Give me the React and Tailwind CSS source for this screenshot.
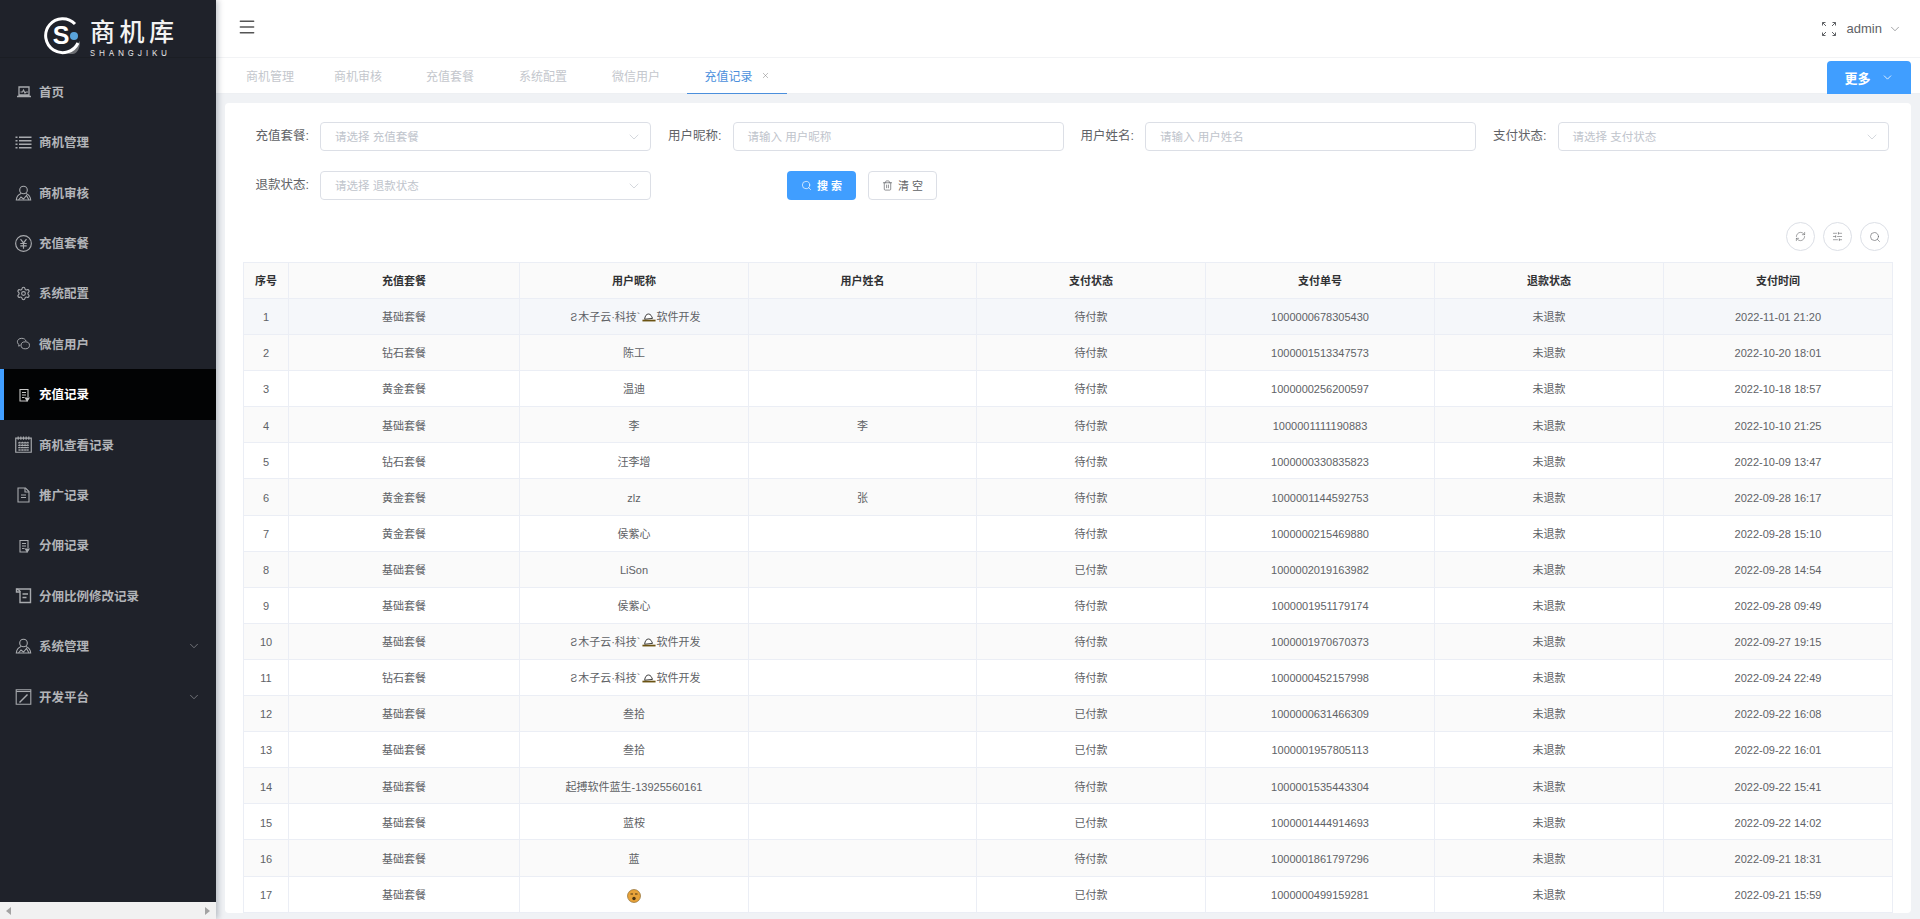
import React from "react";
import { Menu, ChevronDown, Search, Trash2, RefreshCw, SlidersHorizontal, X, Settings } from "lucide-react";

const Icon = ({ className, children, box = "0 0 16 16" }) => (
  <svg viewBox={box} fill="none" stroke="currentColor" strokeWidth="1.1" className={className}>
    {children}
  </svg>
);

const DocIcon = () => (
  <Icon className="w-[12px] h-[14px]" box="0 0 12 14">
    <path d="M9 13H2V1.500h8V9" />
    <path d="M4 4.500h4M4 7h4M4 9.500h2.500" />
    <path d="M7.500 10h3.500L9.200 13z" fill="currentColor" />
  </Icon>
);

const UserIcon = () => (
  <Icon className="w-[17px] h-[16px]">
    <circle cx="8" cy="5" r="3.800" />
    <path d="M5.500 8.500C3 9.500 1 12 .8 15h14.400C15 12 13 9.500 10.500 8.500" />
    <path d="M3 15l2.500-3 2.500 2 3-3.500 2.500 4.500" />
  </Icon>
);

const menus = [
  {
    name: "首页",
    icon: (
      <Icon className="w-[16px] h-[12px]" box="0 0 16 12">
        <path d="M3 1h10v8H3zM1 10.500h14" strokeWidth="1.300" />
        <path d="M4.500 6h2l1-2 1.500 3 1-1h2" />
      </Icon>
    ),
  },
  {
    name: "商机管理",
    icon: (
      <Icon className="w-[17px] h-[13px]" box="0 0 17 13">
        <path d="M4 1.200h12.500M4 4.700h12.500M4 8.200h12.500M4 11.700h12.500" strokeWidth="1.400" />
        <path d="M.5 1.200h2M.5 4.700h2M.5 8.200h2M.5 11.700h2" strokeWidth="1.400" />
      </Icon>
    ),
  },
  { name: "商机审核", icon: <UserIcon /> },
  {
    name: "充值套餐",
    icon: (
      <Icon className="w-[17px] h-[17px]">
        <circle cx="8" cy="8" r="7.400" />
        <path d="M5.200 3.800L8 7.500l2.800-3.700M5 8h6M5 10.300h6M8 7.500V13" />
      </Icon>
    ),
  },
  { name: "系统配置", icon: <Settings className="w-[15px] h-[15px]" strokeWidth={1.75} /> },
  {
    name: "微信用户",
    icon: (
      <Icon className="w-[15px] h-[14px]">
        <path d="M6 1.500C3 1.500 1 3.300 1 5.500c0 1.300.7 2.400 1.800 3.100L2.500 10.500l2-1.100" />
        <path d="M6 1.500c2.500 0 4.500 1.400 4.900 3.300" />
        <ellipse cx="10" cy="9.500" rx="4.800" ry="4" />
        <path d="M8.200 8.800h.1M11.500 8.800h.1" strokeWidth="1.500" />
      </Icon>
    ),
  },
  { name: "充值记录", icon: <DocIcon />, active: true },
  {
    name: "商机查看记录",
    icon: (
      <Icon className="w-[17px] h-[17px]">
        <path d="M.7 2h14.600v13.300H.7z" />
        <path d="M3 .5v3M5.500.5v3M8 .5v3M10.500.5v3M13 .5v3" />
        <path d="M3 6.500h10M3 8.800h10M3 11h10M3 13.200h10M4.500 5.500v8.500M7 5.500v8.500M9.500 5.500v8.500M12 5.500v8.500" strokeDasharray="1.500 .8" />
      </Icon>
    ),
  },
  {
    name: "推广记录",
    icon: (
      <Icon className="w-[13px] h-[16px]" box="0 0 13 16">
        <path d="M1 1h7.500L12 4.500V15H1z" />
        <path d="M8 1v4h4M4 8h5M4 10.500h5" />
      </Icon>
    ),
  },
  { name: "分佣记录", icon: <DocIcon /> },
  {
    name: "分佣比例修改记录",
    icon: (
      <Icon className="w-[17px] h-[16px]">
        <path d="M1 1h14v13.500H4.500V4H1z" strokeWidth="1.400" />
        <path d="M1 1c1.500.5 3.500 1 3.500 3M7 6h5.500M7 9.500h4" strokeWidth="1.400" />
      </Icon>
    ),
  },
  { name: "系统管理", icon: <UserIcon />, arrow: true },
  {
    name: "开发平台",
    icon: (
      <Icon className="w-[17px] h-[16px]">
        <path d="M.7.7h14.600v14.600H.7z" />
        <path d="M.7 2.500h14.600" />
        <path d="M3.500 13l8-8 1 1-8 8z" fill="currentColor" stroke="none" />
      </Icon>
    ),
    arrow: true,
  },
];

const Hat = () => (
  <svg viewBox="0 0 16 10" className="inline-block w-[14px] h-[9px] mx-[1px] align-[-1px]">
    <path d="M3 7C3.500 3 5 1 7.500 1S11 3.500 12 6z" fill="#fff" stroke="#222" strokeWidth="1" />
    <path d="M.5 8.500h15" stroke="#6b5312" strokeWidth="2" />
  </svg>
);

const nick = (
  <span className="pl-[3px]">
    <span className="text-[10px] mr-[1px]">Ƨ</span>木子云·科技`
    <Hat />
    软件开发
  </span>
);

const Face = () => (
  <svg viewBox="0 0 14 14" className="inline-block w-[14px] h-[14px]">
    <circle cx="7" cy="7" r="6.500" fill="#e8a33a" stroke="#7d5a1f" strokeWidth=".6" />
    <path d="M3.500 5h2.500M8 5h2.500" stroke="#4a3312" strokeWidth="1.200" />
    <circle cx="7" cy="9.500" r="1.700" fill="#4a3312" />
  </svg>
);

const rows = [
  ["基础套餐", nick, "", "待付款", "1000000678305430", "2022-11-01 21:20"],
  ["钻石套餐", "陈工", "", "待付款", "1000001513347573", "2022-10-20 18:01"],
  ["黄金套餐", "温迪", "", "待付款", "1000000256200597", "2022-10-18 18:57"],
  ["基础套餐", "李", "李", "待付款", "1000001111190883", "2022-10-10 21:25"],
  ["钻石套餐", "汪李增", "", "待付款", "1000000330835823", "2022-10-09 13:47"],
  ["黄金套餐", "zlz", "张", "待付款", "1000001144592753", "2022-09-28 16:17"],
  ["黄金套餐", "侯紫心", "", "待付款", "1000000215469880", "2022-09-28 15:10"],
  ["基础套餐", "LiSon", "", "已付款", "1000002019163982", "2022-09-28 14:54"],
  ["基础套餐", "侯紫心", "", "待付款", "1000001951179174", "2022-09-28 09:49"],
  ["基础套餐", nick, "", "待付款", "1000001970670373", "2022-09-27 19:15"],
  ["钻石套餐", nick, "", "待付款", "1000000452157998", "2022-09-24 22:49"],
  ["基础套餐", "叁拾", "", "已付款", "1000000631466309", "2022-09-22 16:08"],
  ["基础套餐", "叁拾", "", "已付款", "1000001957805113", "2022-09-22 16:01"],
  ["基础套餐", "起搏软件蓝生-13925560161", "", "待付款", "1000001535443304", "2022-09-22 15:41"],
  ["基础套餐", "蓝桉", "", "已付款", "1000001444914693", "2022-09-22 14:02"],
  ["基础套餐", "蓝", "", "待付款", "1000001861797296", "2022-09-21 18:31"],
  ["基础套餐", <Face />, "", "已付款", "1000000499159281", "2022-09-21 15:59"],
];

const headers = ["序号", "充值套餐", "用户昵称", "用户姓名", "支付状态", "支付单号", "退款状态", "支付时间"];
const colWidths = ["w-[45px]", "w-[231px]", "w-[229px]", "w-[228px]", "w-[229px]", "w-[229px]", "w-[229px]", "w-[229px]"];

const tabs = [
  { name: "商机管理", cls: "ml-[22px] w-[88px]" },
  { name: "商机审核", cls: "w-[92px]" },
  { name: "充值套餐", cls: "w-[93px]" },
  { name: "系统配置", cls: "w-[93px]" },
  { name: "微信用户", cls: "w-[93px]" },
];

const Field = ({ label, placeholder, select }) => (
  <div className="flex items-center h-[29px] gap-[11px]">
    <label className="w-[66px] text-right text-[12.500px] text-[#606266]">{label}:</label>
    <div className="w-[331px] h-[29px] flex items-center justify-between pl-[14px] pr-[8px] border border-[#dcdfe6] rounded-[4px] text-[11.500px] text-[#c0c4cc]">
      <span className="pt-[2px]">{placeholder}</span>
      {select && <ChevronDown className="w-[16px] h-[16px] text-[#c0c4cc]" strokeWidth={1} />}
    </div>
  </div>
);

const RoundBtn = ({ children }) => (
  <div className="w-[29px] h-[29px] flex items-center justify-center rounded-full border border-[#dcdfe6] text-[#606266]">
    {children}
  </div>
);

export default function App() {
  return (
    <div className="flex h-screen w-full overflow-hidden bg-white font-['Liberation_Sans','Noto_Sans_CJK_SC',sans-serif]">
      <aside className="w-[216px] shrink-0 h-full flex flex-col bg-[#1f222a] z-10 shadow-[2px_0_6px_rgba(0,21,41,0.25)]">
        <div className="h-[58px] shrink-0 flex items-start pl-[43px] pt-[17px] gap-[9px] border-b border-[#1b1e24]">
          <svg viewBox="0 0 38 38" className="w-[38px] h-[38px]">
            <path d="M37 24L25 37H30C35 36 37 30 37 24Z" fill="#6a6c70" />
            <path d="M32 7A17 17 0 1 0 35 26" fill="none" stroke="#fff" strokeWidth="3" />
            <text x="18" y="27" textAnchor="middle" fontSize="25" fontWeight="700" fontFamily="Liberation Sans" fill="#fff">S</text>
            <circle cx="31" cy="19" r="4" fill="#5aa4dc" />
          </svg>
          <div className="flex flex-col w-[84px]">
            <span className="text-[25px] leading-[30px] tracking-[4.500px] font-medium text-[#f3f3f3] whitespace-nowrap">商机库</span>
            <span className="text-[8px] leading-[10px] tracking-[3.800px] mt-[1px] text-[#e0e0e0] font-['Inter',sans-serif] whitespace-nowrap">SHANGJIKU</span>
          </div>
        </div>
        <nav className="flex-1 pt-[9px]">
          {menus.map((m) => (
            <div
              key={m.name}
              className={
                m.active
                  ? "relative h-[50.400px] flex items-center bg-[#020304] text-white"
                  : "relative h-[50.400px] flex items-center text-[#b2b4b8]"
              }
            >
              {m.active && <span className="absolute left-0 top-0 bottom-0 w-[4px] bg-[#409eff]" />}
              <span className={m.active ? "w-[39px] pl-[8px] flex justify-center text-[#c8c8c8]" : "w-[39px] pl-[8px] flex justify-center text-[#a8aaae]"}>
                {m.icon}
              </span>
              <span className="text-[12.500px] font-bold pt-[2px]">{m.name}</span>
              {m.arrow && <ChevronDown className="absolute right-[15px] w-[14px] h-[14px] text-[#8f9196]" strokeWidth={1.25} />}
            </div>
          ))}
        </nav>
        <div className="h-[17px] shrink-0 bg-[#f1f1f1] flex items-center justify-between px-[6px]">
          <span className="w-0 h-0 border-y-[4px] border-y-transparent border-r-[5px] border-r-[#a3a3a3]" />
          <span className="w-0 h-0 border-y-[4px] border-y-transparent border-l-[5px] border-l-[#a3a3a3]" />
        </div>
      </aside>

      <main className="flex-1 min-w-0 h-full flex flex-col">
        <header className="h-[58px] shrink-0 flex items-center justify-between border-b border-[#f2f3f5] pl-[21px] pr-[18px]">
          <Menu className="w-[20px] h-[20px] mb-[4px] text-[#555]" strokeWidth={1.75} />
          <div className="flex items-center text-[#606266]">
            <svg viewBox="0 0 14 14" className="w-[14px] h-[14px]" fill="none" stroke="currentColor" strokeWidth="1">
              <path d="M.5 3.500V.5h3M.5.5l3.500 3.500M10.500.5h3v3M13.500.5L10 4M.5 10.500v3h3M.5 13.500L4 10M10.500 13.500h3v-3M13.500 13.500L10 10" />
            </svg>
            <span className="ml-[11px] text-[13px]">admin</span>
            <ChevronDown className="ml-[6px] w-[14px] h-[14px]" strokeWidth={1} />
          </div>
        </header>

        <div className="h-[36px] shrink-0 flex items-stretch relative text-[12px] text-[#c4c7cd] border-b border-[#eef0f3]">
          {tabs.map((t) => (
            <div key={t.name} className={`flex items-center ${t.cls}`}>
              <span className="pl-[8px] pt-[2px]">{t.name}</span>
            </div>
          ))}
          <div className="ml-[-10px] w-[100px] flex items-center justify-center gap-[8px] text-[#4b8fdc] border-b border-[#4b8fdc] h-[36px]">
            <span className="pt-[2px]">充值记录</span>
            <X className="w-[9px] h-[9px] text-[#777]" strokeWidth={1.25} />
          </div>
          <div className="absolute right-[9px] top-[3px] w-[84px] h-[33px] flex items-center justify-center gap-[10px] bg-[#409eff] rounded-t-[4px] text-white text-[13px] font-bold">
            <span className="pt-[2px]">更多</span>
            <ChevronDown className="w-[13px] h-[13px]" strokeWidth={1.5} />
          </div>
        </div>

        <div className="flex-1 min-h-0 bg-[#f0f2f5] pt-[9px] px-[9px] pb-[6px]">
          <div className="h-full bg-white rounded-[4px] overflow-hidden pl-[18px] pt-[19px]">
            <div className="grid grid-cols-[repeat(4,408px)] gap-x-[4.500px] gap-y-[20px]">
              <Field label="充值套餐" placeholder="请选择 充值套餐" select />
              <Field label="用户昵称" placeholder="请输入 用户昵称" />
              <Field label="用户姓名" placeholder="请输入 用户姓名" />
              <Field label="支付状态" placeholder="请选择 支付状态" select />
              <Field label="退款状态" placeholder="请选择 退款状态" select />
              <div className="col-span-2 flex items-center gap-[12px] pl-[131.500px]">
                <button className="w-[69px] h-[29px] flex items-center justify-center gap-[5px] rounded-[4px] bg-[#409eff] text-white text-[11px] font-bold">
                  <Search className="w-[11px] h-[11px]" strokeWidth={1.5} />
                  <span className="pt-[1px]">搜 索</span>
                </button>
                <button className="w-[69px] h-[29px] flex items-center justify-center gap-[5px] rounded-[4px] border border-[#dcdfe6] text-[#606266] text-[11px]">
                  <Trash2 className="w-[11px] h-[11px]" strokeWidth={1.5} />
                  <span className="pt-[1px]">清 空</span>
                </button>
              </div>
            </div>

            <div className="mt-[22px] w-[1646px] flex justify-end gap-[8px]">
              <RoundBtn><RefreshCw className="w-[11px] h-[11px]" strokeWidth={1.25} /></RoundBtn>
              <RoundBtn><SlidersHorizontal className="w-[11px] h-[11px]" strokeWidth={1.25} /></RoundBtn>
              <RoundBtn><Search className="w-[12px] h-[12px]" strokeWidth={1.25} /></RoundBtn>
            </div>

            <table className="mt-[11px] w-[1649px] table-fixed border-collapse text-[11px] text-center text-[#606266]">
              <colgroup>
                {colWidths.map((w, i) => (
                  <col key={i} className={w} />
                ))}
              </colgroup>
              <thead>
                <tr className="h-[36px] bg-[#fafafa] text-[#303133]">
                  {headers.map((h) => (
                    <th key={h} className="border border-[#ebeef5] font-bold p-0 pt-[2px]">{h}</th>
                  ))}
                </tr>
              </thead>
              <tbody>
                {rows.map((r, i) => (
                  <tr
                    key={i}
                    className={i === 0 ? "h-[36.100px] bg-[#f5f7fa]" : i % 2 === 1 ? "h-[36.100px] bg-[#fafafa]" : "h-[36.100px] bg-white"}
                  >
                    <td className="border border-[#ebeef5] p-0 pt-[2px]">{i + 1}</td>
                    <td className="border border-[#ebeef5] p-0 pt-[2px]">{r[0]}</td>
                    <td className="border border-[#ebeef5] p-0 pt-[2px]">{r[1]}</td>
                    <td className="border border-[#ebeef5] p-0 pt-[2px]">{r[2]}</td>
                    <td className="border border-[#ebeef5] p-0 pt-[2px]">{r[3]}</td>
                    <td className="border border-[#ebeef5] p-0 pt-[2px]">{r[4]}</td>
                    <td className="border border-[#ebeef5] p-0 pt-[2px]">未退款</td>
                    <td className="border border-[#ebeef5] p-0 pt-[2px]">{r[5]}</td>
                  </tr>
                ))}
              </tbody>
            </table>
          </div>
        </div>
      </main>
    </div>
  );
}
